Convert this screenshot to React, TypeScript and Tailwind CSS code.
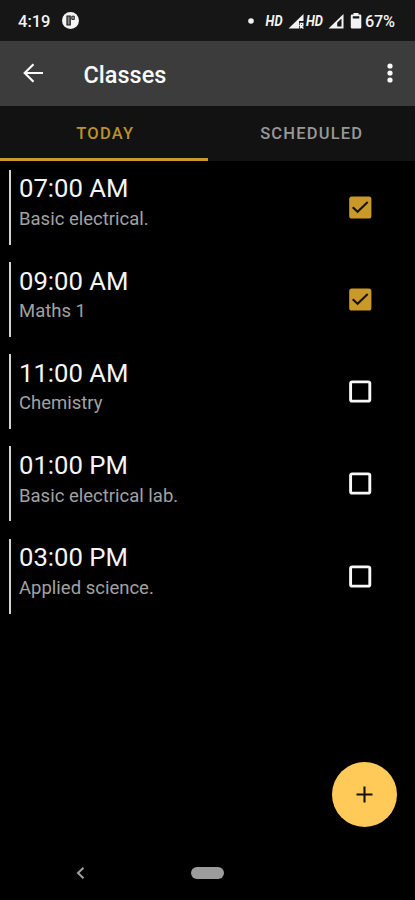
const classes = [
  { time: '07:00 AM', subject: 'Basic electrical.', done: true },
  { time: '09:00 AM', subject: 'Maths 1', done: true },
  { time: '11:00 AM', subject: 'Chemistry', done: false },
  { time: '01:00 PM', subject: 'Basic electrical lab.', done: false },
  { time: '03:00 PM', subject: 'Applied science.', done: false },
];

function StatusBar() {
  return (
    <div className="flex h-[41px] shrink-0 items-center bg-[#161616] pl-[18px] pr-[19px] text-[#f2f2f2]">
      <span className="mt-[2px] w-[44px] text-[16.5px] font-medium leading-5">4:19</span>
      <svg className="h-[17px] w-[17px]" viewBox="0 0 17 17">
        <circle cx="8.5" cy="8.5" r="8.5" fill="#f4f4f4" />
        <path d="M5 4h3.2v9H5z" fill="#8a8a8a" stroke="#1b1b1b" strokeWidth="1.2" />
        <path d="M9.8 4.2h2.5v3.3H9.8z" fill="#999" stroke="#2b2b2b" strokeWidth="1" />
      </svg>
      <svg className="ml-auto h-[18px] w-[103px]" viewBox="0 0 103 18">
        <circle cx="3" cy="9" r="2.8" fill="#f2f2f2" />
        <g className="text-[14px] font-bold italic" fill="#f2f2f2">
          <text x="17.6" y="14" textLength="17" lengthAdjust="spacingAndGlyphs">HD</text>
          <text x="57.9" y="14" textLength="17" lengthAdjust="spacingAndGlyphs">HD</text>
        </g>
        <path d="M40.5 16.5L55.5 2v7H51v7.5z" fill="#f2f2f2" />
        <path d="M52.4 16.5v-5h2.4v2.3h-2.4l3 2.7" fill="none" stroke="#f2f2f2" strokeWidth="1.4" />
        <path fillRule="evenodd" d="M80.5 16.5L95.5 2v14.5zM89.2 14.5h4.3V6.6l-4.3 4.2z" fill="#f2f2f2" />
      </svg>
      <svg className="-ml-[1px] h-[17px] w-[12px]" viewBox="0 0 12 17">
        <path fillRule="evenodd" d="M3.5 1h5v1.5h1.6q1.2 0 1.2 1.2v11.6q0 1.2-1.2 1.2H2q-1.2 0-1.2-1.2V3.7q0-1.2 1.2-1.2h1.5zM2.8 4.3v2.3h6.5V4.3z" fill="#f2f2f2" />
      </svg>
      <span className="ml-[3px] mt-[2px] w-[31px] whitespace-nowrap text-[16.3px] font-medium leading-5 tracking-[-0.3px]">67%</span>
    </div>
  );
}

function Header() {
  return (
    <header className="flex h-[65px] shrink-0 items-center bg-[#3c3c3c] pb-[2px] pl-[23px] pr-[22px] text-[#fafafa]">
      <svg className="h-[20px] w-[20px]" viewBox="0 0 20 20" fill="none" stroke="currentColor" strokeWidth="2.2">
        <path d="M20 10H2M10.5 1.2L1.7 10l8.8 8.8" />
      </svg>
      <h1 className="ml-[40.5px] mt-[5px] text-[23.5px] font-medium leading-7">Classes</h1>
      <svg className="ml-auto h-[20px] w-[6px]" viewBox="0 0 6 20" fill="currentColor">
        <circle cx="3" cy="3" r="2.6" />
        <circle cx="3" cy="10" r="2.6" />
        <circle cx="3" cy="17" r="2.6" />
      </svg>
    </header>
  );
}

function Tabs() {
  return (
    <nav className="grid h-[55px] shrink-0 grid-cols-2 bg-[#121212] text-center text-[16.5px] font-medium leading-[55px] tracking-[1.2px]">
      <div className="h-[55px] border-b-[3px] border-[#c99a27] pl-[3px] text-[#bd9128]">TODAY</div>
      <div className="h-[55px] pl-[1px] text-[#989898]">SCHEDULED</div>
    </nav>
  );
}

function Checkbox({ checked }: { checked: boolean }) {
  return (
    <svg className="mt-[26px] h-[23px] w-[23px]" viewBox="0 0 23 23" fill="none">
      {checked ? (
        <>
          <rect x=".2" y=".4" width="22.2" height="22.2" rx="2.6" fill="#c99a29" />
          <path d="M3.7 11.2l4.9 4.6L18.7 6.1" stroke="#17130a" strokeWidth="2.1" />
        </>
      ) : (
        <rect x="1.6" y="1.9" width="19.2" height="19.2" rx="1.7" stroke="#f8f8f8" strokeWidth="2.9" />
      )}
    </svg>
  );
}

export default function App() {
  return (
    <div className="flex h-[900px] w-[415px] flex-col overflow-hidden bg-black font-['Roboto',sans-serif]">
      <StatusBar />
      <Header />
      <Tabs />
      <main className="flex grow flex-col pt-[8.5px]">
        {classes.map((item) => (
          <div key={item.time} className="flex h-[92.3px] items-start pl-[9px] pr-[43.5px]">
            <div className="h-[75px] w-[2px] bg-[#d2d2d2]" />
            <div className="ml-[8px] grow whitespace-nowrap pt-[3.75px]">
              <div className="text-[25.7px] leading-[30px] text-[#f5f5f5]">{item.time}</div>
              <div className="pt-[0.5px] text-[18.5px] leading-[30px] text-[#a2a2a2]">{item.subject}</div>
            </div>
            <Checkbox checked={item.done} />
          </div>
        ))}
      </main>
      <div className="flex shrink-0 justify-end pb-[21.5px] pr-[18px]">
        <button className="flex h-[65px] w-[65px] items-center justify-center rounded-full bg-[#ffca58]">
          <svg className="h-[17px] w-[17px]" viewBox="0 0 17 17" stroke="#14110a" strokeWidth="2.1">
            <path d="M8.5 .5v16M.5 8.5h16" />
          </svg>
        </button>
      </div>
      <div className="flex h-[52px] shrink-0 items-start pl-[76px] pt-[18px]">
        <svg className="mt-[1px] h-[12px] w-[9px]" viewBox="0 0 9 12" fill="none" stroke="#a0a0a0" strokeWidth="2">
          <path d="M7.5 .8L2 6l5.5 5.2" />
        </svg>
        <div className="ml-[106px] mt-[1px] h-[12px] w-[33px] rounded-full bg-[#9c9c9c]" />
      </div>
    </div>
  );
}
